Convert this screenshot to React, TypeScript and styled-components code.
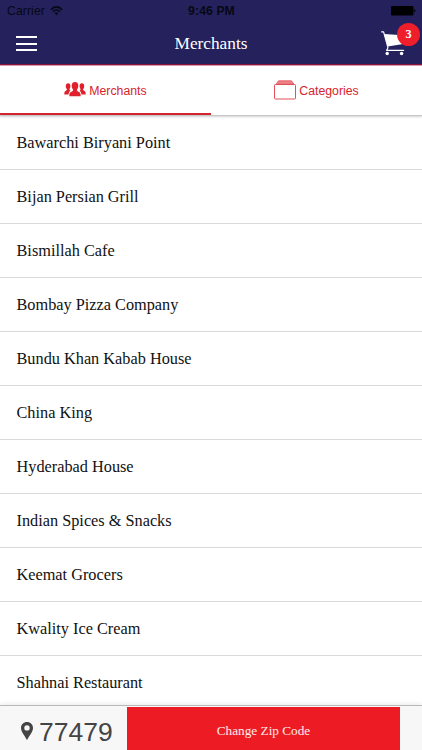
import React from 'react';
import styled, { createGlobalStyle } from 'styled-components';

const GlobalStyle = createGlobalStyle`
  * { box-sizing: border-box; }
  body { margin: 0; background: #fff; }
`;

const sans = `"Liberation Sans", Arial, Helvetica, sans-serif`;
const serif = `"Liberation Serif", "Times New Roman", serif`;

const Screen = styled.div`
  width: 422px;
  height: 750px;
  display: flex;
  flex-direction: column;
  overflow: hidden;
  background: #fff;
  font-family: ${serif};
`;

const Header = styled.header`
  flex: none;
  height: 66px;
  background: #24215c;
  border-bottom: 1px solid #e09ab0;
  box-shadow: inset 0 -1px 0 #85143e;
`;

const StatusBar = styled.div`
  height: 22px;
  display: grid;
  grid-template-columns: 1fr auto 1fr;
  align-items: center;
  padding: 0 6px 0 7px;
  font: 12.2px/22px ${sans};
  color: #080814;
`;

const Carrier = styled.div`
  display: flex;
  align-items: center;
  gap: 5px;
  letter-spacing: 0.1px;
`;

const Clock = styled.div`
  font-weight: bold;
  letter-spacing: 0.1px;
`;

const BatterySlot = styled.div`
  display: flex;
  justify-content: flex-end;
`;

const NavBar = styled.div`
  height: 43px;
  display: grid;
  grid-template-columns: 1fr auto 1fr;
  align-items: center;
  color: #fff;
`;

const MenuButton = styled.button`
  width: 21px;
  height: 15px;
  margin: 0 0 0 16px;
  padding: 0;
  border: 0;
  background: none;
  display: flex;
  flex-direction: column;
  justify-content: space-between;
`;

const MenuBar = styled.span`
  width: 21px;
  height: 2px;
  background: #fff;
`;

const Title = styled.h1`
  margin: 0;
  font-size: 17.3px;
  font-weight: normal;
`;

const CartButton = styled.div`
  position: relative;
  justify-self: end;
  width: 27px;
  height: 26px;
  margin-right: 14px;

  svg { display: block; }
`;

const Badge = styled.span`
  position: absolute;
  left: 16px;
  top: -8px;
  width: 23px;
  height: 23px;
  border-radius: 50%;
  background: #ee1f2b;
  color: #fff;
  font-size: 12.2px;
  font-weight: bold;
  line-height: 22px;
  text-align: center;
`;

const Tabs = styled.nav`
  flex: none;
  height: 50px;
  display: grid;
  grid-template-columns: 1fr 1fr;
  border-bottom: 1px solid #c8c8c8;
  box-shadow: 0 1px 2px rgba(0, 0, 0, 0.18);
`;

const Tab = styled.div<{ $active?: boolean }>`
  display: flex;
  align-items: center;
  justify-content: center;
  gap: 3px;
  height: 49px;
  padding-bottom: ${p => (p.$active ? 0 : 1)}px;
  border-bottom: ${p => (p.$active ? '2px solid #d3242d' : '0')};
  color: #d9232e;
  font: 12.3px/16px ${sans};

  svg { flex: none; }
`;

const TabLabel = styled.span`
  padding-top: 2px;
`;

const List = styled.ul`
  flex: 1;
  min-height: 0;
  margin: 0;
  padding: 0;
  list-style: none;
  overflow: hidden;
`;

const Row = styled.li`
  height: 54px;
  display: flex;
  align-items: center;
  padding-left: 16.5px;
  border-bottom: 1px solid #d9d9d9;
  font-size: 16.3px;
  color: #111;
`;

const Footer = styled.footer`
  flex: none;
  height: 45px;
  display: grid;
  grid-template-columns: 127px 273px 1fr;
  background: #f7f7f7;
  border-top: 1px solid #b9b9b9;
  box-shadow: 0 -1px 5px rgba(0, 0, 0, 0.09);
`;

const ZipCode = styled.div`
  display: flex;
  align-items: center;
  gap: 6px;
  padding: 8px 0 0 21px;
  font: 26.5px/30px ${sans};
  color: #444;

  svg { flex: none; margin-bottom: 3px; }
`;

const ChangeButton = styled.button`
  margin: 1px 0 0;
  padding: 5px 0 0;
  border: 0;
  background: #ed1c24;
  color: #ffecec;
  font: 13.25px/16px ${serif};
`;

const WifiIcon = () => (
  <svg width="13" height="10" viewBox="0 0 13 10" fill="none" stroke="#080814" strokeWidth="1.6">
    <path d="M.9 3.7C4-.1 9-.1 12.1 3.7" />
    <path d="M3 5.7c2-2.3 5-2.3 7 0" />
    <path d="M6.5 9.2 4.6 7.1c1.1-1 2.7-1 3.8 0z" fill="#080814" stroke="none" />
  </svg>
);

const BatteryIcon = () => (
  <svg width="25" height="10" viewBox="0 0 25 10" fill="#000">
    <rect width="22.5" height="9.6" rx="1.4" />
    <path d="M23.2 3.2c1.6.4 1.6 2.8 0 3.2z" />
  </svg>
);

const CartIcon = () => (
  <svg width="27" height="26" viewBox="0 0 27 26">
    <path d="M3.2 3 22 4.2 20.8 13.2 6.6 15.4z" fill="#fff" />
    <path d="M.6.8h2l4.4 16-1.4 2.5H22.6" fill="none" stroke="#fff" strokeWidth="1.2" strokeLinejoin="round" strokeLinecap="round" />
    <circle cx="6.2" cy="22.5" r="1.7" fill="#fff" />
    <circle cx="20.6" cy="22.5" r="1.7" fill="#fff" />
  </svg>
);

const PeopleIcon = () => (
  <svg width="22" height="15" viewBox="0 0 22 15" fill="#e0202b">
    <path d="M4.1 1.2c1.5 0 2.4 1.1 2.3 3 0 1.4-.6 2.1-.9 2.9-.1.8.1 1.2.9 1.6C5.2 9.5 4.7 10.6 4.6 12.4H.3c0-2.2.3-3.1 1.6-3.7.9-.4 1.1-.9.9-1.6-.5-.7-1-1.5-1-2.9 0-1.9.8-3 2.3-3z" />
    <path d="M17.9 1.2c-1.5 0-2.4 1.1-2.3 3 0 1.4.6 2.1.9 2.9.1.8-.1 1.2-.9 1.6 1.2.8 1.7 1.9 1.8 3.7h4.3c0-2.2-.3-3.1-1.6-3.7-.9-.4-1.1-.9-.9-1.6.5-.7 1-1.5 1-2.9 0-1.9-.8-3-2.3-3z" />
    <path d="M11 0c2.2 0 3.4 1.5 3.3 3.9-.1 1.7-.8 2.8-1.3 3.6-.1 1.1.1 1.7 1.5 2.3 1.7.7 2.1 1.4 2.2 4.4H5.3c.1-3 .5-3.7 2.2-4.4C8.9 9.2 9.1 8.6 9 7.5 8.5 6.7 7.8 5.6 7.7 3.9 7.6 1.5 8.8 0 11 0z" />
  </svg>
);

const FolderIcon = () => (
  <svg width="22" height="20" viewBox="0 0 22 20" fill="none" stroke="#e0525a">
    <path d="M4.5.8h13l2.3 3.4H2.2z" fill="#ee8388" strokeWidth=".8" />
    <rect x=".5" y="4.5" width="21" height="14.5" rx=".8" />
  </svg>
);

const PinIcon = () => (
  <svg width="12" height="18" viewBox="0 0 12 18">
    <path fillRule="evenodd" fill="#444" d="M6 0c3.4 0 6 2.5 6 5.9C12 9.5 8 14.2 6 18 4 14.2 0 9.5 0 5.9 0 2.5 2.6 0 6 0zm0 3.2a2.7 2.7 0 1 0 0 5.4 2.7 2.7 0 0 0 0-5.4z" />
  </svg>
);

const merchants = [
  'Bawarchi Biryani Point',
  'Bijan Persian Grill',
  'Bismillah Cafe',
  'Bombay Pizza Company',
  'Bundu Khan Kabab House',
  'China King',
  'Hyderabad House',
  'Indian Spices & Snacks',
  'Keemat Grocers',
  'Kwality Ice Cream',
  'Shahnai Restaurant',
];

export default function App() {
  return (
    <Screen>
      <GlobalStyle />
      <Header>
        <StatusBar>
          <Carrier>Carrier <WifiIcon /></Carrier>
          <Clock>9:46 PM</Clock>
          <BatterySlot><BatteryIcon /></BatterySlot>
        </StatusBar>
        <NavBar>
          <MenuButton aria-label="Menu"><MenuBar /><MenuBar /><MenuBar /></MenuButton>
          <Title>Merchants</Title>
          <CartButton><CartIcon /><Badge>3</Badge></CartButton>
        </NavBar>
      </Header>
      <Tabs>
        <Tab $active><PeopleIcon /><TabLabel>Merchants</TabLabel></Tab>
        <Tab><FolderIcon /><TabLabel>Categories</TabLabel></Tab>
      </Tabs>
      <List>
        {merchants.map(name => <Row key={name}>{name}</Row>)}
      </List>
      <Footer>
        <ZipCode><PinIcon />77479</ZipCode>
        <ChangeButton>Change Zip Code</ChangeButton>
      </Footer>
    </Screen>
  );
}
